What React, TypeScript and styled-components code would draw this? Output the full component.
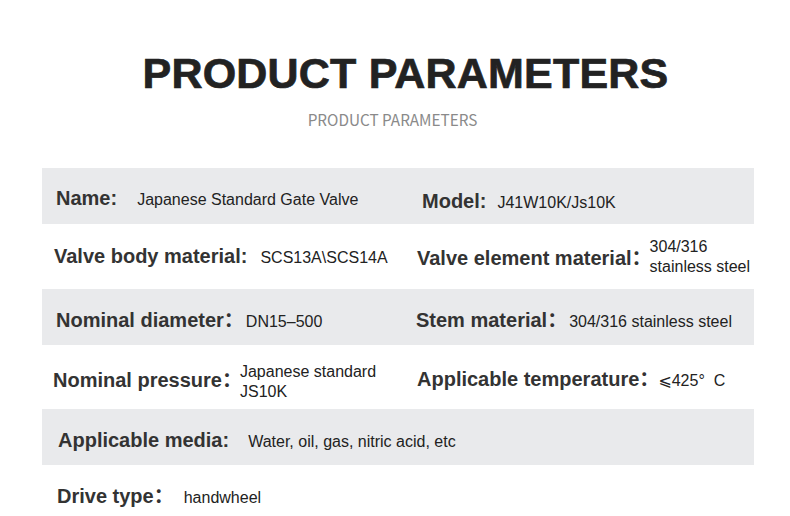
import React from "react";
import styled, { createGlobalStyle } from "styled-components";

const GlobalStyle = createGlobalStyle`
  html, body {
    margin: 0;
    padding: 0;
    background: #ffffff;
    overflow: hidden;
  }
  body {
    font-family: "Liberation Sans", Arial, sans-serif;
  }
`;

const Page = styled.div`
  width: 790px;
  height: 516px;
  display: flex;
  flex-direction: column;
`;

const Header = styled.header`
  display: flex;
  flex-direction: column;
  align-items: center;
  padding-top: 52px;
`;

const Title = styled.h1`
  margin: 0;
  padding-left: 21px;
  font-family: "Liberation Sans", Arial, sans-serif;
  font-weight: 700;
  font-size: 43px;
  line-height: 43px;
  letter-spacing: 0.2px;
  color: #222222;
  -webkit-text-stroke: 0.7px #222222;
`;

const Subtitle = styled.div`
  margin-top: 14px;
  padding-right: 5px;
  font-family: "Noto Sans CJK SC", "Noto Sans", sans-serif;
  font-weight: 400;
  font-size: 15.3px;
  line-height: 20px;
  color: #8a8a8a;
`;

const Table = styled.section`
  margin: 39px 36px 0 42px;
  display: flex;
  flex-direction: column;
`;

const Row = styled.div<{ $shaded: boolean; $height: number }>`
  display: grid;
  grid-template-columns: 368px 1fr;
  height: ${(p) => p.$height}px;
  background: ${(p) => (p.$shaded ? "#e9eaec" : "transparent")};
`;

const Cell = styled.div<{ $indent: number; $drop: number; $wide?: boolean }>`
  display: flex;
  align-items: center;
  box-sizing: border-box;
  padding-left: ${(p) => p.$indent}px;
  padding-top: ${(p) => p.$drop}px;
  grid-column: ${(p) => (p.$wide ? "1 / span 2" : "auto")};
  white-space: nowrap;
`;

const Line = styled.div<{ $stacked: boolean }>`
  display: flex;
  align-items: ${(p) => (p.$stacked ? "center" : "baseline")};
`;

const Label = styled.span`
  font-family: "Liberation Sans", Arial, sans-serif;
  font-weight: 700;
  font-size: 20px;
  color: #333333;
`;

const Colon = styled.span`
  font-family: "Noto Sans CJK SC", sans-serif;
  font-weight: 700;
`;

const Value = styled.span<{ $offset: number; $lower: number }>`
  margin-left: ${(p) => p.$offset}px;
  margin-top: ${(p) => p.$lower}px;
  font-family: "Liberation Sans", "DejaVu Sans", Arial, sans-serif;
  font-weight: 400;
  font-size: 16px;
  line-height: 20px;
  color: #222222;
`;

type Param = {
  label: string;
  wideColon?: boolean;
  value: string[];
  indent: number;
  offset: number;
  drop: number;
  lower?: number;
};

type RowData = {
  shaded: boolean;
  height: number;
  cells: Param[];
};

const rows: RowData[] = [
  {
    shaded: true,
    height: 56,
    cells: [
      { label: "Name:", value: ["Japanese Standard Gate Valve"], indent: 14, offset: 20, drop: 5 },
      { label: "Model:", value: ["J41W10K/Js10K"], indent: 12, offset: 11, drop: 10 },
    ],
  },
  {
    shaded: false,
    height: 65,
    cells: [
      { label: "Valve body material:", value: ["SCS13A\\SCS14A"], indent: 12, offset: 13, drop: 0 },
      {
        label: "Valve element material",
        wideColon: true,
        value: ["304/316", "stainless steel"],
        indent: 7,
        offset: -2,
        drop: 0,
        lower: 0,
      },
    ],
  },
  {
    shaded: true,
    height: 56,
    cells: [
      { label: "Nominal diameter", wideColon: true, value: ["DN15\u2013500"], indent: 14, offset: 2, drop: 2 },
      { label: "Stem material", wideColon: true, value: ["304/316 stainless steel"], indent: 6, offset: 2, drop: 2 },
    ],
  },
  {
    shaded: false,
    height: 64,
    cells: [
      {
        label: "Nominal pressure",
        wideColon: true,
        value: ["Japanese standard", "JS10K"],
        indent: 11,
        offset: -2,
        drop: 2,
        lower: 8,
      },
      {
        label: "Applicable temperature",
        wideColon: true,
        value: ["\u2A7D425\u00B0\u00A0 C"],
        indent: 7,
        offset: -1,
        drop: 0,
      },
    ],
  },
  {
    shaded: true,
    height: 56,
    cells: [
      {
        label: "Applicable media:",
        value: ["Water, oil, gas, nitric acid, etc"],
        indent: 16,
        offset: 19,
        drop: 6,
      },
    ],
  },
  {
    shaded: false,
    height: 51,
    cells: [{ label: "Drive type", wideColon: true, value: ["handwheel"], indent: 15, offset: 10, drop: 8 }],
  },
];

export default function App() {
  return (
    <>
      <GlobalStyle />
      <Page>
        <Header>
          <Title>PRODUCT PARAMETERS</Title>
          <Subtitle>PRODUCT PARAMETERS</Subtitle>
        </Header>
        <Table>
          {rows.map((row, i) => (
            <Row key={i} $shaded={row.shaded} $height={row.height}>
              {row.cells.map((c, j) => (
                <Cell key={j} $indent={c.indent} $drop={c.drop} $wide={row.cells.length === 1}>
                  <Line $stacked={c.value.length > 1}>
                    <Label>
                      {c.label}
                      {c.wideColon && <Colon>{"\uFF1A"}</Colon>}
                    </Label>
                    <Value $offset={c.offset} $lower={c.lower ?? 0}>
                      {c.value.map((line, k) => (
                        <React.Fragment key={k}>
                          {k > 0 && <br />}
                          {line}
                        </React.Fragment>
                      ))}
                    </Value>
                  </Line>
                </Cell>
              ))}
            </Row>
          ))}
        </Table>
      </Page>
    </>
  );
}
